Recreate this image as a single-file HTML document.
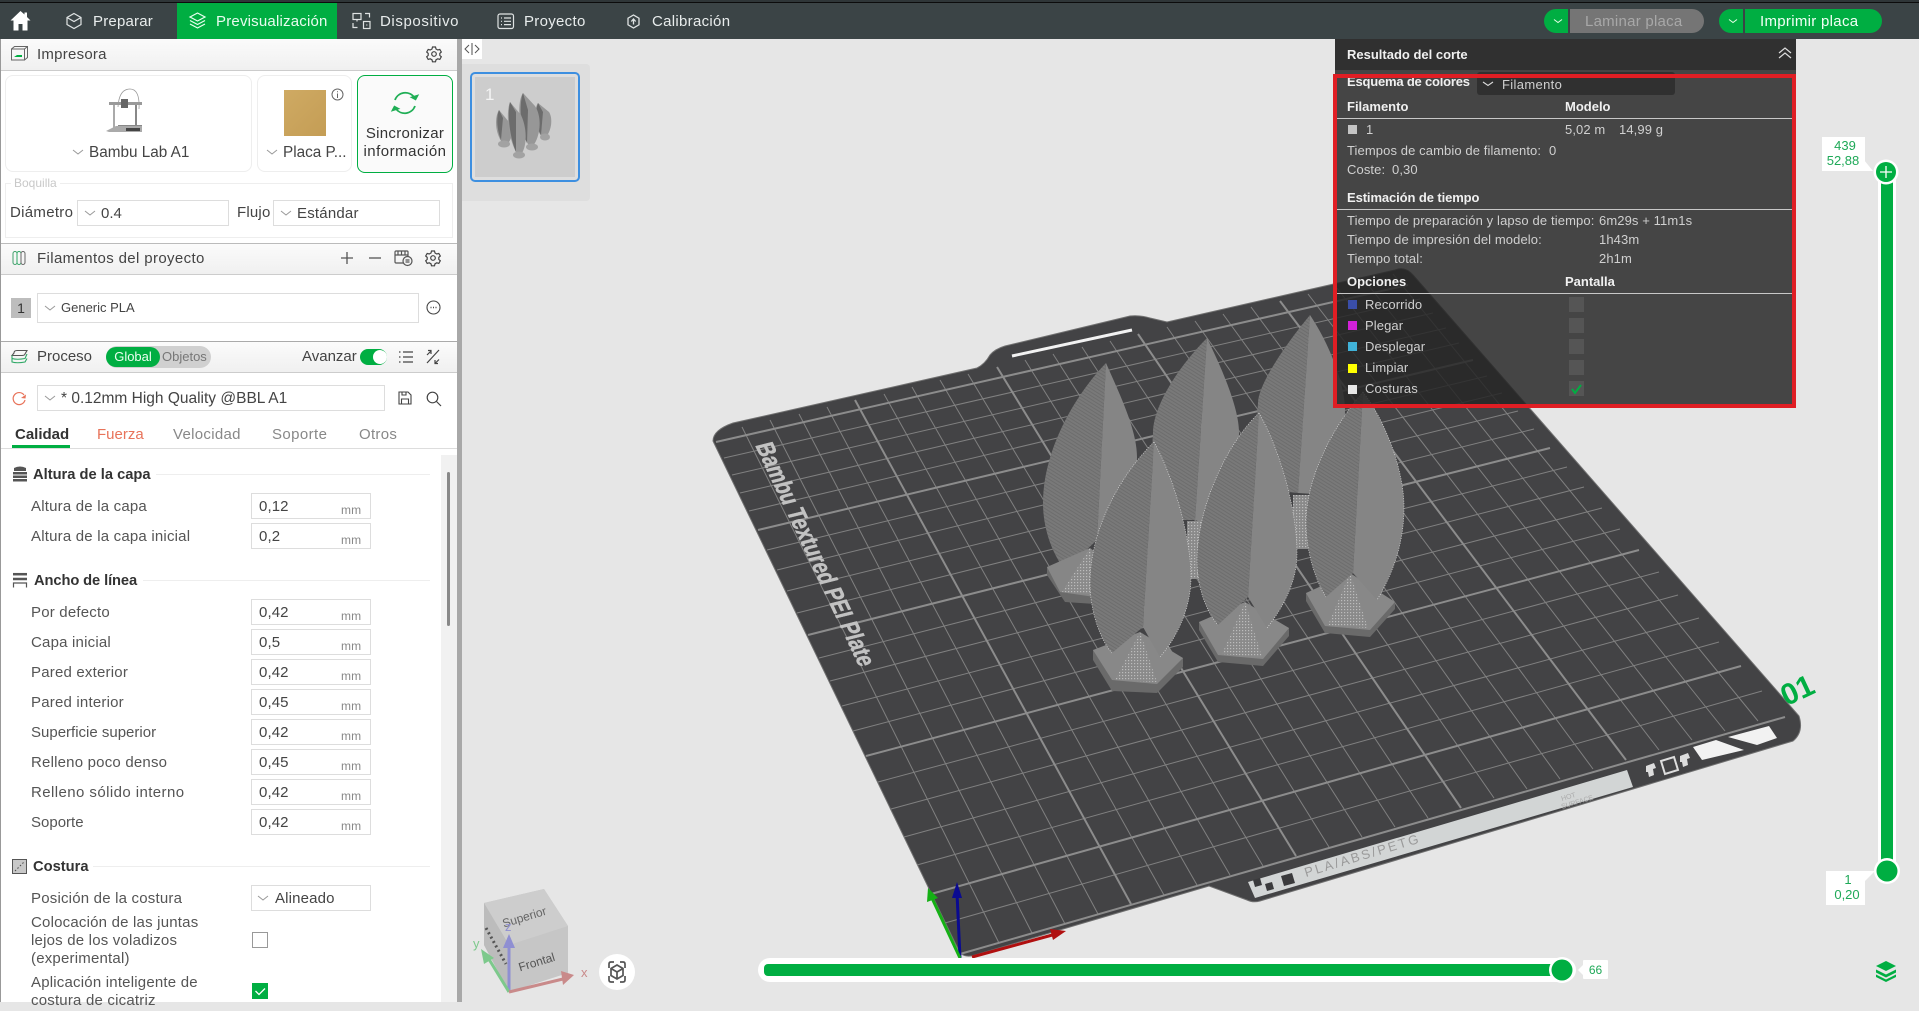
<!DOCTYPE html>
<html lang="es"><head><meta charset="utf-8"><title>Bambu Studio</title>
<style>
html,body{margin:0;padding:0;width:1919px;height:1002px;overflow:hidden;background:#e6e6e6;font-family:"Liberation Sans",sans-serif;color:#444}
div,span,svg{box-sizing:border-box}
.a{position:absolute}
.t{position:absolute;line-height:20px;height:20px;white-space:nowrap;font-size:15px;transform:translateY(1px)}
.nav{color:#e8ecec;letter-spacing:.2px}
.hd{position:absolute;left:1px;width:456px;background:linear-gradient(#fbfbfb,#f0f0f0);border-bottom:1px solid #ccc}
.i{position:absolute;left:251px;width:120px;height:26px;border:1px solid #ddd;background:#fff;font-size:15px;line-height:26px;padding-left:7px;color:#444;letter-spacing:.1px}
.i i{position:absolute;left:89px;top:3px;font-style:normal;font-size:12px;color:#888}
.l{position:absolute;left:31px;font-size:15px;line-height:20px;height:20px;white-space:nowrap;color:#555;letter-spacing:.2px;transform:translateY(1px)}
.s{position:absolute;left:33px;font-size:14.7px;font-weight:bold;line-height:20px;height:20px;color:#333;white-space:nowrap;transform:translateY(1px)}
.r{position:absolute;height:1px;background:#eee;width:auto;right:1489px}
.p{position:absolute;line-height:18px;height:18px;font-size:13px;color:#d0d0d0;white-space:nowrap;letter-spacing:.1px;transform:translateY(1px)}
.b{position:absolute;line-height:18px;height:18px;font-size:13px;font-weight:bold;color:#f0f0f0;white-space:nowrap;transform:translateY(1px)}
.ln{position:absolute;left:1337px;width:455px;height:1px;background:#c8c8c8}
.sw{position:absolute;left:1348px;width:9px;height:9px}
.cb{position:absolute;left:1569px;width:15px;height:15px;background:#555}
.fr{position:absolute;border:1px solid #ddd;background:#fff}
svg{position:absolute;overflow:visible}
</style></head><body>

<!-- 3D viewport -->
<svg class="a" style="left:0;top:0" width="1919" height="1002" viewBox="0 0 1919 1002">
<defs>
<pattern id="st" width="3" height="3" patternUnits="userSpaceOnUse" patternTransform="rotate(32)"><rect width="3" height="3" fill="#797979"/><rect width="3" height="1" fill="#6d6d6d"/></pattern>
<pattern id="dt" width="3" height="3" patternUnits="userSpaceOnUse"><rect width="3" height="3" fill="#8a8a8a"/><rect width="1.200" height="1.200" fill="#bcbcbc"/></pattern>
</defs>
<path d="M713 441Q713 430 733 423L977 368Q985 364 990 355Q995 349 1005 346L1130 316Q1140 315 1150 318L1167 322L1395 270Q1405 266 1413 275L1799 716Q1804 732 1793 741L1260 901Q1253 903 1247 900L1209 886L975 955Q966 958 960 953Z" fill="#434345" stroke="#707070" stroke-width="1"/>
<g stroke="#808080" stroke-width="1" fill="none">
<path d="M724 458L1420 299M732 475L1433 313M740 493L1446 328M749 511L1459 343M767 550L1487 376M777 570L1502 393M787 591L1518 411M797 613L1534 429M819 658L1567 467M830 681L1584 487M842 706L1602 508M853 731L1620 529M878 782L1659 572M891 809L1678 595M904 837L1699 618M917 865L1719 642M945 923L1762 691"/>
<path d="M742 427L999 943M770 420L1032 933M799 414L1065 924M827 407L1098 914M884 394L1164 895M912 387L1197 885M940 380L1230 875M968 374L1263 866M1025 360L1329 847M1053 354L1362 837M1082 347L1395 827M1110 341L1428 818M1167 327L1494 798M1195 321L1527 789M1223 314L1560 779M1251 307L1593 769M1308 294L1659 750M1336 287L1692 740M1365 281L1725 731M1393 274L1758 721"/>
</g>
<g stroke="#8c8c8c" stroke-width="2" fill="none">
<path d="M716 442L1408 285M758 530L1473 360M808 635L1550 448M866 756L1639 550M931 894L1741 666M960 954L1785 717"/>
<path d="M855 400L1131 904M997 367L1296 856M1138 334L1461 808M1280 301L1626 760"/>
</g>
<path d="M1012 356L1132 330" stroke="#f2f2f2" stroke-width="3"/>
<text transform="matrix(.425 .904 -1.36 .34 755 445)" font-family="Liberation Sans" font-weight="bold" font-size="18" fill="#c2c2c2" stroke="#c2c2c2" stroke-width=".4" textLength="246" lengthAdjust="spacingAndGlyphs">Bambu Textured PEI Plate</text>
<polygon points="1248,882 1627,770 1633,787 1255,898" fill="#d2d5d5"/>
<text transform="matrix(.96 -.29 .29 .96 1306 877)" font-family="Liberation Sans" font-size="13" fill="#9a9a9a" textLength="118">PLA/ABS/PETG</text>
<text transform="matrix(.96 -.29 .29 .96 1562 801)" font-family="Liberation Sans" font-size="7" fill="#aaa">HOT</text>
<text transform="matrix(.96 -.29 .29 .96 1562 809)" font-family="Liberation Sans" font-size="7" fill="#aaa">SURFACE</text>
<path d="M1253 880l7-2 2 7-7 2zM1265 884l7-2 2 7-7 2zM1281 876l11-3 3 10-11 3z" fill="#3a3a3c"/>
<path d="M1661 761l13-4 4 13-13 4z" fill="none" stroke="#ddd" stroke-width="2"/>
<path d="M1646 766l8-3 2 5-3 1 1 6-5 2-1-5-2 0zM1680 756l8-3 2 5-3 1 1 6-5 2-1-5-2 0z" fill="#ddd"/>
<polygon points="1693,747 1716,740 1744,750 1702,760" fill="#f2f2f2"/>
<polygon points="1728,737 1769,726 1777,738 1757,745" fill="#f2f2f2"/>
<text transform="rotate(-25 1800 688)" x="1780" y="699" font-family="Liberation Sans" font-weight="bold" font-size="30" fill="#00ae42">01</text>

<!-- bed axes -->
<path d="M960 958L957 893" stroke="#0a0a90" stroke-width="3"/><polygon points="957,882 952,898 962,898" fill="#0a0a90"/>
<path d="M960 958L931 896" stroke="#15b015" stroke-width="3"/><polygon points="928,888 927,902 938,898" fill="#15b015"/>
<path d="M972 957L1056 934" stroke="#b01010" stroke-width="3"/><polygon points="1066,931 1050,929 1053,940" fill="#b01010"/>

<!-- models: back row -->
<g>
<path d="M1106 363C1075 395 1043 450 1043 503C1043 530 1053 555 1065 570L1097 540Z" fill="url(#st)"/>
<path d="M1106 363C1120 395 1137 430 1137 457C1137 500 1115 560 1110 575L1097 540Z" fill="#858585"/>
<polygon points="1047,567 1047,575 1065,602 1095,604 1120,579 1120,570" fill="#6a6a6a"/>
<polygon points="1047,567 1090,548 1120,570 1095,597 1060,592" fill="#868686"/>
<polygon points="1062,592 1090,548 1100,595" fill="url(#dt)"/>
<path d="M1207 338C1180 365 1153 405 1153 433C1150 470 1160 500 1170 520L1195 520Z" fill="url(#st)"/>
<path d="M1207 338C1225 375 1239 410 1239 433C1239 470 1232 510 1222 530L1195 520Z" fill="#858585"/>
<rect x="1187" y="521" width="16" height="58" fill="url(#dt)"/>
<path d="M1310 315C1285 345 1258 385 1258 403C1255 440 1262 470 1270 490L1298 493Z" fill="url(#st)"/>
<path d="M1310 315C1330 345 1345 385 1345 410C1345 440 1340 470 1330 495L1298 493Z" fill="#858585"/>
<rect x="1293" y="495" width="18" height="54" fill="url(#dt)"/>
</g>
<!-- models: front row -->
<g stroke-linejoin="round">
<polygon points="1306,593 1306,601 1325,633 1370,637 1395,609 1395,602" fill="#6a6a6a"/>
<polygon points="1306,593 1350,573 1395,602 1370,630 1325,626" fill="#888"/>
<polygon points="1328,625 1350,573 1368,628" fill="url(#dt)"/>
<path d="M1363 392C1330 430 1306 480 1306 523C1306 550 1315 580 1326 597L1353 573Z" fill="url(#st)"/>
<path d="M1363 392C1385 420 1404 470 1404 507C1404 540 1395 570 1377 600L1353 573Z" fill="#858585"/>
<path d="M1363 392C1330 430 1306 480 1306 523C1306 550 1315 580 1326 597M1363 392C1385 420 1404 470 1404 507C1404 540 1395 570 1377 600" fill="none" stroke="#dcdcdc" stroke-width=".7" stroke-dasharray="1 1.500"/>

<polygon points="1199,622 1199,630 1218,662 1263,666 1289,636 1289,628" fill="#6a6a6a"/>
<polygon points="1199,622 1245,602 1289,628 1263,659 1218,655" fill="#888"/>
<polygon points="1222,654 1245,602 1262,657" fill="url(#dt)"/>
<path d="M1259 413C1225 445 1197 510 1197 560C1197 585 1205 610 1218 625L1248 597Z" fill="url(#st)"/>
<path d="M1259 413C1280 450 1297 510 1297 553C1297 580 1285 605 1267 628L1248 597Z" fill="#858585"/>
<path d="M1259 413C1225 445 1197 510 1197 560C1197 585 1205 610 1218 625M1259 413C1280 450 1297 510 1297 553C1297 580 1285 605 1267 628" fill="none" stroke="#dcdcdc" stroke-width=".7" stroke-dasharray="1 1.500"/>

<polygon points="1093,650 1093,660 1112,691 1157,693 1183,667 1183,658" fill="#6a6a6a"/>
<polygon points="1093,650 1140,632 1183,658 1157,684 1112,680" fill="#888"/>
<polygon points="1115,680 1140,632 1157,682" fill="url(#dt)"/>
<path d="M1154 442C1120 475 1090 530 1090 583C1090 610 1100 640 1112 653L1143 627Z" fill="url(#st)"/>
<path d="M1154 442C1175 480 1191 540 1191 577C1191 610 1175 640 1160 657L1143 627Z" fill="#858585"/>
<path d="M1154 442C1120 475 1090 530 1090 583C1090 610 1100 640 1112 653M1154 442C1175 480 1191 540 1191 577C1191 610 1175 640 1160 657" fill="none" stroke="#dcdcdc" stroke-width=".7" stroke-dasharray="1 1.500"/>
</g>

<!-- nav cube -->
<polygon points="484,903 544,889 568,926 568,973 509,992 484,945" fill="#c6c6c6"/>
<polygon points="484,903 544,889 568,926 509,945" fill="#cdcdcd"/>
<polygon points="484,903 509,945 509,992 484,945" fill="#bcbcbc"/>
<text transform="rotate(-17 525 918)" x="502" y="921" font-family="Liberation Sans" font-size="12" fill="#666">Superior</text>
<text transform="rotate(-17 537 962)" x="518" y="966" font-family="Liberation Sans" font-size="12" fill="#555">Frontal</text>
<path d="M486 928L506 964" stroke="#555" stroke-width="3" stroke-dasharray="2 3"/>
<path d="M509 992V945" stroke="#8f8fd2" stroke-width="3"/><polygon points="509,934 503,948 515,948" fill="#8f8fd2"/>
<path d="M509 992L487 956" stroke="#7dc98c" stroke-width="3"/><polygon points="481,949 484,964 494,958" fill="#7dc98c"/>
<path d="M509 992L563 979" stroke="#c98a8a" stroke-width="3"/><polygon points="574,975 561,971 563,985" fill="#c98a8a"/>
<text x="505" y="931" font-family="Liberation Sans" font-size="13" fill="#8f8fd2">z</text>
<text x="473" y="948" font-family="Liberation Sans" font-size="13" fill="#7dc98c">y</text>
<text x="581" y="977" font-family="Liberation Sans" font-size="13" fill="#c98a8a">x</text>
<circle cx="617" cy="972" r="18" fill="#fff"/>
<g fill="none" stroke="#555" stroke-width="1.700"><path d="M609 968v-4q0-2 2-2h3M620 962h3q2 0 2 2v4M609 976v4q0 2 2 2h3M620 982h3q2 0 2-2v-4"/><path d="M617 965l6 3.500v7l-6 3.500-6-3.500v-7zM611 968.500l6 3.500 6-3.500M617 972v7"/></g>

<!-- sliders -->
<rect x="758" y="958" width="818" height="24" rx="12" fill="#fff"/>
<rect x="764" y="964" width="800" height="12" rx="4" fill="#00ae42"/>
<circle cx="1562" cy="970" r="13" fill="#fff"/><circle cx="1562" cy="970" r="10.500" fill="#00ae42"/>
<polygon points="1584,964 1578,970 1584,976" fill="#fff"/>
<rect x="1583" y="960" width="25" height="19" rx="1" fill="#fff"/>
<rect x="1878" y="165" width="18" height="712" rx="9" fill="#fff"/>
<rect x="1881" y="172" width="12" height="699" fill="#00ae42"/>
<circle cx="1886" cy="172" r="12.500" fill="#fff"/><circle cx="1886" cy="172" r="10" fill="#00ae42"/>
<path d="M1886 166v12M1880 172h12" stroke="#fff" stroke-width="1.300"/>
<circle cx="1887" cy="871" r="13" fill="#fff"/><circle cx="1887" cy="871" r="10.500" fill="#00ae42"/>
<rect x="1822" y="137" width="43" height="34" fill="#fff"/><polygon points="1864,160 1873,171 1864,171" fill="#fff"/>
<rect x="1826" y="871" width="39" height="34" fill="#fff"/><polygon points="1864,871 1875,871 1864,882" fill="#fff"/>
<g fill="#00ae42">
<path d="M1886 961l10 5-10 5-10-5z"/><path d="M1876 969.500l10 5 10-5v3l-10 5-10-5z"/><path d="M1876 974.500l10 5 10-5v2.500l-10 5-10-5z" />
</g>
</svg>
<div class="t" style="left:1822px;width:46px;top:135px;text-align:center;font-size:13px;color:#1fa958">439</div>
<div class="t" style="left:1820px;width:46px;top:150px;text-align:center;font-size:13px;color:#1fa958">52,88</div>
<div class="t" style="left:1826px;width:44px;top:869px;text-align:center;font-size:13px;color:#1fa958">1</div>
<div class="t" style="left:1825px;width:44px;top:884px;text-align:center;font-size:13px;color:#1fa958">0,20</div>
<div class="t" style="left:1583px;width:25px;top:959px;text-align:center;font-size:12px;color:#1fa958">66</div>

<!-- thumbnail panel -->
<div class="a" style="left:462px;top:64px;width:128px;height:137px;background:#dedede;border-radius:0 4px 4px 0"></div>
<div class="a" style="left:470px;top:72px;width:110px;height:110px;border:2px solid #3d8fe0;border-radius:5px;background:#dedede"></div>
<div class="a" style="left:475px;top:77px;width:100px;height:100px;background:#cdcdcd"></div>
<div class="t" style="left:485px;top:84px;color:#f4f4f4;font-size:17px">1</div>
<svg class="a" style="left:0;top:0" width="600" height="200" viewBox="0 0 600 200">
<path d="M538 103C533 110 534 130 544 139C552 132 553 118 549 112Z" fill="#979797"/><path d="M538 103C535 112 535 125 541 135L543 112Z" fill="#6c6c6c"/>
<path d="M523 93C516 103 519 135 531 148C540 140 543 118 535 106Z" fill="#979797"/><path d="M523 93C519 103 520 128 527 143L528 110Z" fill="#6c6c6c"/>
<path d="M499 110C494 118 495 135 504 145C513 143 513 130 509 122Z" fill="#979797"/><path d="M499 110C496 118 497 130 501 140L503 118Z" fill="#6c6c6c"/>
<path d="M510 102C505 115 509 143 519 157C527 150 528 130 521 115Z" fill="#9a9a9a"/><path d="M510 102C507 115 510 138 516 152L516 112Z" fill="#6c6c6c"/>
<ellipse cx="504" cy="144" rx="6" ry="3.500" fill="#a2a2a2"/><ellipse cx="519" cy="155" rx="6" ry="3.500" fill="#a2a2a2"/><ellipse cx="532" cy="147" rx="6" ry="3.500" fill="#a2a2a2"/><ellipse cx="545" cy="137" rx="5" ry="3.500" fill="#a2a2a2"/>
</svg>
<div class="a" style="left:462px;top:39px;width:20px;height:20px;background:#fff"></div>
<svg class="a" style="left:462px;top:39px" width="20" height="20" fill="none" stroke="#555" stroke-width="1"><path d="M7 6l-4 4 4 4M13 6l4 4-4 4"/><path d="M10 4v12" stroke="#888" stroke-width="1.500"/></svg>

<!-- slice panel -->
<div class="a" style="left:1335px;top:39px;width:461px;height:31px;background:#303030"></div>
<div class="b" style="left:1347px;top:45px;font-size:13px">Resultado del corte</div>
<svg class="a" style="left:1778px;top:46px" width="14" height="14" fill="none" stroke="#ddd" stroke-width="1.200"><path d="M1 7l6-5 6 5M1 12l6-5 6 5"/></svg>
<div class="a" style="left:1335px;top:70px;width:461px;height:338px;background:rgba(37,37,37,.834)"></div>
<div class="a" style="left:1477px;top:72px;width:198px;height:23px;background:#303030;border-radius:3px"></div>
<svg class="a" style="left:1482px;top:80px" width="12" height="8" fill="none" stroke="#ddd" stroke-width="1.100"><path d="M1 2l5 3.500 5-3.500"/></svg>
<div class="p" style="left:1502px;top:75px;letter-spacing:.35px">Filamento</div>
<div class="b" style="left:1347px;top:72px;letter-spacing:-.2px">Esquema de colores</div>
<div class="b" style="left:1347px;top:97px">Filamento</div><div class="b" style="left:1565px;top:97px">Modelo</div>
<div class="ln" style="top:118px"></div>
<div class="sw" style="top:125px;background:#c4c4c4"></div>
<div class="p" style="left:1366px;top:120px">1</div>
<div class="p" style="left:1565px;top:120px">5,02 m</div><div class="p" style="left:1619px;top:120px">14,99 g</div>
<div class="p" style="left:1347px;top:141px">Tiempos de cambio de filamento:</div><div class="p" style="left:1549px;top:141px">0</div>
<div class="p" style="left:1347px;top:160px">Coste:</div><div class="p" style="left:1392px;top:160px">0,30</div>
<div class="b" style="left:1347px;top:188px;letter-spacing:-.1px">Estimación de tiempo</div>
<div class="ln" style="top:209px"></div>
<div class="p" style="left:1347px;top:211px;letter-spacing:.13px">Tiempo de preparación y lapso de tiempo:</div><div class="p" style="left:1599px;top:211px">6m29s + 11m1s</div>
<div class="p" style="left:1347px;top:230px">Tiempo de impresión del modelo:</div><div class="p" style="left:1599px;top:230px">1h43m</div>
<div class="p" style="left:1347px;top:249px">Tiempo total:</div><div class="p" style="left:1599px;top:249px">2h1m</div>
<div class="b" style="left:1347px;top:272px">Opciones</div><div class="b" style="left:1565px;top:272px">Pantalla</div>
<div class="ln" style="top:293px"></div>
<div class="sw" style="top:300px;background:#3a4ea8"></div><div class="p" style="left:1365px;top:295px">Recorrido</div><div class="cb" style="top:297px"></div>
<div class="sw" style="top:321px;background:#d321d8"></div><div class="p" style="left:1365px;top:316px">Plegar</div><div class="cb" style="top:318px"></div>
<div class="sw" style="top:342px;background:#40b2d8"></div><div class="p" style="left:1365px;top:337px">Desplegar</div><div class="cb" style="top:339px"></div>
<div class="sw" style="top:364px;background:#ffff00"></div><div class="p" style="left:1365px;top:358px">Limpiar</div><div class="cb" style="top:360px"></div>
<div class="sw" style="top:385px;background:#e8e8e8"></div><div class="p" style="left:1365px;top:379px">Costuras</div><div class="cb" style="top:381px"></div>
<svg class="a" style="left:1569px;top:381px" width="15" height="15" fill="none" stroke="#00ae42" stroke-width="2"><path d="M3 8l3 4 6-8"/></svg>
<div class="a" style="left:1333px;top:74px;width:463px;height:334px;border:4px solid #e01e24"></div>

<!-- top bar -->
<div class="a" style="left:0;top:0;width:1919px;height:39px;background:#3b4446;border-top:2px solid #2f3638"></div>
<div class="a" style="left:0;top:2px;width:1919px;height:1px;background:#0c0c0c"></div>
<div class="a" style="left:177px;top:3px;width:160px;height:36px;background:#00ae42"></div>
<svg class="a" style="left:10px;top:10px" width="21" height="22"><path d="M10.500 1L0.500 10.500H3.500V20.500H8.500V14H12.500V20.500H17.500V10.500H20.500L17 7V2.500H14.500V4.500Z" fill="#fff"/></svg>
<svg class="a" style="left:65px;top:12px" width="18" height="18" fill="none" stroke="#dfe3e3" stroke-width="1.200"><path d="M9 1.500L16 5.500V12.500L9 16.500L2 12.500V5.500ZM2 5.500L9 9.500L16 5.500M9 9.500"/></svg>
<div class="t nav" style="left:93px;top:11px">Preparar</div>
<svg class="a" style="left:188px;top:12px" width="19" height="18" fill="none" stroke="#e8fff0" stroke-width="1.200"><path d="M9.500 1L17 5L9.500 9L2 5ZM2 8.500L9.500 12.500L17 8.500M2 12L9.500 16L17 12"/></svg>
<div class="t nav" style="left:216px;top:11px;color:#e9fbef">Previsualización</div>
<svg class="a" style="left:352px;top:12px" width="19" height="18" fill="none" stroke="#dfe3e3" stroke-width="1.200"><rect x="1" y="1.500" width="8" height="6"/><path d="M13 1.500h4.500v4M1 11v4.500h4.500"/><rect x="11.500" y="9.500" width="6.500" height="7"/><path d="M5 7.500v2M14.800 12.500v1"/></svg>
<div class="t nav" style="left:380px;top:11px;letter-spacing:.6px">Dispositivo</div>
<svg class="a" style="left:497px;top:13px" width="18" height="17" fill="none" stroke="#dfe3e3" stroke-width="1.200"><rect x="1" y="1" width="15.500" height="14.500" rx="2"/><path d="M4 5h1M7 5h7M4 8.300h1M7 8.300h7M4 11.600h1M7 11.600h7"/></svg>
<div class="t nav" style="left:524px;top:11px;letter-spacing:.3px">Proyecto</div>
<svg class="a" style="left:626px;top:14px" width="15" height="15" fill="none" stroke="#dfe3e3" stroke-width="1.300"><path d="M7.500 1L13 4.200V10.800L7.500 14L2 10.800V4.200Z"/><path d="M7.500 10.500V5.500M5.300 7.500L7.500 5L9.700 7.500"/></svg>
<div class="t nav" style="left:652px;top:11px;letter-spacing:.3px">Calibración</div>

<div class="a" style="left:1544px;top:9px;width:24px;height:24px;background:#00ae42;border-radius:12px 0 0 12px"></div>
<svg class="a" style="left:1553px;top:18px" width="10" height="7" fill="none" stroke="#e8ffe8" stroke-width="1"><path d="M1 1.500l4 3 4-3"/></svg>
<div class="a" style="left:1570px;top:9px;width:134px;height:24px;background:#757575;border-radius:0 12px 12px 0"></div>
<div class="t" style="left:1585px;top:11px;color:#a8a8a8;letter-spacing:.25px">Laminar placa</div>
<div class="a" style="left:1719px;top:9px;width:24px;height:24px;background:#00ae42;border-radius:12px 0 0 12px"></div>
<svg class="a" style="left:1728px;top:18px" width="10" height="7" fill="none" stroke="#e8ffe8" stroke-width="1"><path d="M1 1.500l4 3 4-3"/></svg>
<div class="a" style="left:1745px;top:9px;width:137px;height:24px;background:#00ae42;border-radius:0 12px 12px 0"></div>
<div class="t" style="left:1760px;top:11px;color:#f2fff6;letter-spacing:.3px">Imprimir placa</div>

<!-- sidebar -->
<div class="a" style="left:0;top:39px;width:457px;height:963px;background:#fff;border-left:1px solid #999"></div>
<div class="a" style="left:457px;top:39px;width:5px;height:963px;background:#a8a8a8"></div>

<div class="hd" style="top:39px;height:32px"></div>
<svg class="a" style="left:11px;top:46px" width="17" height="15" fill="none" stroke="#666" stroke-width="1"><rect x=".5" y="3" width="13" height="11"/><path d="M.5 3L3.500.5H16.500V11.500L13.500 14M13.500 3L16.500.5"/><path d="M3 11H11V9H6Z" fill="#00ae42" stroke="none"/></svg>
<div class="t" style="left:37px;top:44px;letter-spacing:.25px">Impresora</div>
<svg class="a" style="left:426px;top:46px" width="16" height="16" viewBox="0 0 16 16" fill="none" stroke="#444" stroke-width="1.200"><path d="M6.500 1h3l.5 2 1.800 1 2-.6 1.500 2.600-1.500 1.400v2l1.500 1.400-1.500 2.600-2-.6-1.800 1-.5 2h-3l-.5-2-1.800-1-2 .6-1.500-2.600 1.500-1.400v-2L.7 6l1.500-2.600 2 .6 1.800-1z"/><circle cx="8" cy="8" r="2.300"/></svg>

<div class="fr" style="left:5px;top:75px;width:247px;height:97px;border-radius:8px;border-color:#eee"></div>
<svg class="a" style="left:104px;top:87px" width="44" height="48" viewBox="0 0 44 48">
<path d="M14 20Q15 2 26 2Q36 2 35 22" fill="none" stroke="#999" stroke-width=".8"/>
<rect x="9" y="15" width="2" height="26" fill="#aaa"/><rect x="31" y="15" width="2" height="28" fill="#888"/>
<rect x="5" y="15" width="33" height="3" fill="#9a9a9a"/><rect x="17" y="12" width="7" height="9" fill="#666"/>
<rect x="14" y="38" width="24" height="3" fill="#888"/>
<path d="M2 44L12 39H38V45H5Z" fill="#aaa"/><rect x="22" y="41" width="14" height="3" fill="#444"/>
</svg>
<svg class="a" style="left:72px;top:149px" width="12" height="7" fill="none" stroke="#999"><path d="M1 1l5 4 5-4"/></svg>
<div class="t" style="left:89px;top:142px;font-size:15.300px;color:#444">Bambu Lab A1</div>

<div class="fr" style="left:257px;top:75px;width:95px;height:97px;border-radius:8px;border-color:#eee"></div>
<div class="a" style="left:284px;top:90px;width:42px;height:46px;background:linear-gradient(135deg,#cfaa63,#c49d55)"></div>
<svg class="a" style="left:331px;top:88px" width="13" height="13" fill="none" stroke="#666"><circle cx="6.500" cy="6.500" r="5.500"/><path d="M6.500 5.500V10M6.500 3.200V4.200"/></svg>
<svg class="a" style="left:266px;top:149px" width="12" height="7" fill="none" stroke="#999"><path d="M1 1l5 4 5-4"/></svg>
<div class="t" style="left:283px;top:142px;font-size:15.300px;color:#444">Placa P...</div>

<div class="fr" style="left:357px;top:75px;width:96px;height:98px;border-radius:8px;border-color:#00ae42;background:#fafafa"></div>
<svg class="a" style="left:389px;top:90px" width="32" height="26" fill="none" stroke="#1fae55" stroke-width="1.800"><path d="M6 10A11 11 0 0 1 25 7"/><path d="M26 16A11 11 0 0 1 7 19"/><path d="M21 9l7 1 1-7z" fill="#1fae55" stroke="none" transform="rotate(20 26 7)"/><path d="M11 17l-7-1-1 7z" fill="#1fae55" stroke="none" transform="rotate(20 6 19)"/></svg>
<div class="t" style="left:357px;width:96px;top:123px;text-align:center;color:#333;letter-spacing:.3px">Sincronizar</div>
<div class="t" style="left:357px;width:96px;top:141px;text-align:center;color:#333;letter-spacing:.5px">información</div>

<div class="a" style="left:5px;top:183px;width:448px;height:55px;border:1px solid #eee"></div>
<div class="t" style="left:11px;top:172px;background:#fff;padding:0 3px;font-size:12px;color:#c8c8c8">Boquilla</div>
<div class="t" style="left:10px;top:202px;color:#444;letter-spacing:.3px">Diámetro</div>
<div class="fr" style="left:77px;top:200px;width:152px;height:26px"></div>
<svg class="a" style="left:84px;top:210px" width="12" height="7" fill="none" stroke="#999"><path d="M1 1l5 4 5-4"/></svg>
<div class="t" style="left:101px;top:203px">0.4</div>
<div class="t" style="left:237px;top:202px;color:#444;letter-spacing:.2px">Flujo</div>
<div class="fr" style="left:273px;top:200px;width:167px;height:26px"></div>
<svg class="a" style="left:280px;top:210px" width="12" height="7" fill="none" stroke="#999"><path d="M1 1l5 4 5-4"/></svg>
<div class="t" style="left:297px;top:203px;letter-spacing:.2px">Estándar</div>

<div class="hd" style="top:243px;height:32px;border-top:1px solid #bbb"></div>
<svg class="a" style="left:12px;top:250px" width="16" height="16" fill="none" stroke="#3f9f6a" stroke-width="1"><rect x="1" y="1.500" width="4" height="13" rx="2"/><rect x="5" y="1.500" width="4" height="13" rx="2" stroke="#2fa866"/><rect x="9" y="1.500" width="4" height="13" rx="2" stroke="#666"/></svg>
<div class="t" style="left:37px;top:248px;letter-spacing:.37px">Filamentos del proyecto</div>
<svg class="a" style="left:340px;top:251px" width="14" height="14" stroke="#555" stroke-width="1.300"><path d="M7 1v12M1 7h12"/></svg>
<svg class="a" style="left:368px;top:251px" width="14" height="14" stroke="#555" stroke-width="1.300"><path d="M1 7h12"/></svg>
<svg class="a" style="left:394px;top:250px" width="19" height="16" fill="none" stroke="#555" stroke-width="1.200"><rect x="1" y="1" width="13" height="12" rx="1"/><path d="M1 5h13M4 1v4M7.500 1v4M11 1v4"/><circle cx="13.500" cy="11" r="4.500" fill="#f3f3f3"/><path d="M11.500 10h4M11.500 12h4"/></svg>
<svg class="a" style="left:425px;top:250px" width="16" height="16" viewBox="0 0 16 16" fill="none" stroke="#444" stroke-width="1.200"><path d="M6.500 1h3l.5 2 1.800 1 2-.6 1.500 2.600-1.500 1.400v2l1.500 1.400-1.500 2.600-2-.6-1.800 1-.5 2h-3l-.5-2-1.800-1-2 .6-1.500-2.600 1.500-1.400v-2L.7 6l1.500-2.600 2 .6 1.800-1z"/><circle cx="8" cy="8" r="2.300"/></svg>

<div class="a" style="left:11px;top:298px;width:20px;height:20px;background:#bdbdbd;text-align:center;line-height:20px;font-size:14px;color:#333">1</div>
<div class="fr" style="left:37px;top:293px;width:382px;height:30px"></div>
<svg class="a" style="left:44px;top:305px" width="12" height="7" fill="none" stroke="#999"><path d="M1 1l5 4 5-4"/></svg>
<div class="t" style="left:61px;top:297px;font-size:13px">Generic PLA</div>
<svg class="a" style="left:426px;top:300px" width="15" height="15" fill="none" stroke="#444" stroke-width="1.100"><circle cx="7.500" cy="7.500" r="6.500"/><path d="M4.500 7.500h1M7 7.500h1M9.500 7.500h1" stroke-width="1.400"/></svg>

<div class="hd" style="top:341px;height:32px;border-top:1px solid #aaa"></div>
<svg class="a" style="left:11px;top:349px" width="17" height="16" fill="none" stroke="#555" stroke-width="1.100"><path d="M3 4Q3 1.500 6 1.500H16L14 5Q13.500 6.500 11 6.500H1L3 4Z"/><path d="M1 6.500V9.500Q6 11 14 9.500L16 5M1 10V13Q6 14.500 14 13L16 9.500" stroke="#2fa866"/></svg>
<div class="t" style="left:37px;top:346px">Proceso</div>
<div class="a" style="left:106px;top:346px;width:105px;height:22px;background:#d0d0d0;border-radius:11px"></div>
<div class="a" style="left:106px;top:347px;width:54px;height:20px;background:#00ae42;border-radius:10px;text-align:center;line-height:20px;font-size:13px;color:#eafff0">Global</div>
<div class="t" style="left:162px;top:346px;font-size:13px;color:#777">Objetos</div>
<div class="t" style="left:302px;top:346px">Avanzar</div>
<div class="a" style="left:360px;top:349px;width:27px;height:16px;background:#00ae42;border-radius:8px"></div>
<div class="a" style="left:373px;top:350px;width:14px;height:14px;background:#fff;border-radius:7px"></div>
<svg class="a" style="left:398px;top:350px" width="15" height="14" stroke="#444" stroke-width="1.300"><path d="M1 2h1.500M1 7h1.500M1 12h1.500M5 2h10M5 7h10M5 12h10"/></svg>
<svg class="a" style="left:425px;top:349px" width="16" height="16" fill="none" stroke="#444" stroke-width="1.200"><path d="M3 1.500L6 1.500L6 5M6 2L2 6M14 1L2 14M13 14.500H10V11M10 14.500L14 10.500"/></svg>

<svg class="a" style="left:12px;top:391px" width="15" height="15" fill="none" stroke="#e8735a" stroke-width="1.200"><path d="M12 4A6 6 0 1 0 13 9"/><path d="M9 7L13.500 7.500L14 3.500Z" fill="#e8735a" stroke="none"/></svg>
<div class="fr" style="left:37px;top:385px;width:348px;height:26px"></div>
<svg class="a" style="left:44px;top:395px" width="12" height="7" fill="none" stroke="#999"><path d="M1 1l5 4 5-4"/></svg>
<div class="t" style="left:61px;top:388px;font-size:15.500px">* 0.12mm High Quality @BBL A1</div>
<svg class="a" style="left:398px;top:391px" width="14" height="14" fill="none" stroke="#444" stroke-width="1.100"><path d="M1 1H10L13 4V13H1Z"/><path d="M3.500 13V8H10.500V13M4 1V4H8V1"/></svg>
<svg class="a" style="left:426px;top:391px" width="16" height="16" fill="none" stroke="#444" stroke-width="1.200"><circle cx="6.500" cy="6.500" r="5.300"/><path d="M10.500 10.500L15 15"/></svg>

<div class="t" style="left:15px;top:424px;font-weight:bold;color:#333">Calidad</div>
<div class="a" style="left:12px;top:445px;width:58px;height:3px;background:#00ae42"></div>
<div class="t" style="left:97px;top:424px;color:#e8735a">Fuerza</div>
<div class="t" style="left:173px;top:424px;color:#888;letter-spacing:.3px">Velocidad</div>
<div class="t" style="left:272px;top:424px;color:#888;letter-spacing:.4px">Soporte</div>
<div class="t" style="left:359px;top:424px;color:#888;letter-spacing:.3px">Otros</div>
<div class="a" style="left:1px;top:448px;width:456px;height:1px;background:#ddd"></div>
<div class="a" style="left:441px;top:455px;width:16px;height:547px;background:#f1f1f1"></div>
<div class="a" style="left:447px;top:472px;width:3px;height:154px;background:#888;border-radius:2px"></div>

<svg class="a" style="left:12px;top:466px" width="16" height="16" fill="#555"><path d="M2 2Q8-1 14 2V5H2Z"/><rect x="1" y="6" width="14" height="2.500"/><rect x="1" y="9.500" width="14" height="2.500"/><rect x="1" y="13" width="14" height="2.500"/></svg>
<div class="s" style="top:464px">Altura de la capa</div><div class="r" style="left:156px;top:474px"></div>
<div class="l" style="top:496px">Altura de la capa</div><div class="i" style="top:493px">0,12<i>mm</i></div>
<div class="l" style="top:526px">Altura de la capa inicial</div><div class="i" style="top:523px">0,2<i>mm</i></div>

<svg class="a" style="left:12px;top:573px" width="16" height="15" fill="none" stroke="#555" stroke-width="1.200"><path d="M1 1.200H15" stroke-width="2.500"/><path d="M1 6H15" stroke-width="2.500"/><path d="M1.500 14.500V10H14.500V14.500"/></svg>
<div class="s" style="left:34px;top:570px;letter-spacing:-.1px">Ancho de línea</div><div class="r" style="left:143px;top:580px"></div>
<div class="l" style="top:602px">Por defecto</div><div class="i" style="top:599px">0,42<i>mm</i></div>
<div class="l" style="top:632px">Capa inicial</div><div class="i" style="top:629px">0,5<i>mm</i></div>
<div class="l" style="top:662px">Pared exterior</div><div class="i" style="top:659px">0,42<i>mm</i></div>
<div class="l" style="top:692px">Pared interior</div><div class="i" style="top:689px">0,45<i>mm</i></div>
<div class="l" style="top:722px;letter-spacing:0">Superficie superior</div><div class="i" style="top:719px">0,42<i>mm</i></div>
<div class="l" style="top:752px">Relleno poco denso</div><div class="i" style="top:749px">0,45<i>mm</i></div>
<div class="l" style="top:782px;letter-spacing:.42px">Relleno sólido interno</div><div class="i" style="top:779px">0,42<i>mm</i></div>
<div class="l" style="top:812px;letter-spacing:0">Soporte</div><div class="i" style="top:809px">0,42<i>mm</i></div>

<svg class="a" style="left:12px;top:859px" width="15" height="15"><rect x=".5" y=".5" width="14" height="14" fill="#c8c8c8" stroke="#555"/><path d="M3 12L12 3" stroke="#444" stroke-dasharray="1.500 2"/></svg>
<div class="s" style="top:856px">Costura</div><div class="r" style="left:93px;top:866px"></div>
<div class="l" style="top:888px">Posición de la costura</div>
<div class="fr" style="left:251px;top:885px;width:120px;height:26px"></div>
<svg class="a" style="left:257px;top:895px" width="12" height="7" fill="none" stroke="#999"><path d="M1 1l5 4 5-4"/></svg>
<div class="t" style="left:275px;top:888px;letter-spacing:.15px">Alineado</div>
<div class="l" style="top:912px">Colocación de las juntas</div>
<div class="l" style="top:930px">lejos de los voladizos</div>
<div class="l" style="top:948px">(experimental)</div>
<div class="a" style="left:252px;top:932px;width:16px;height:16px;border:1px solid #999;background:#fff"></div>
<div class="l" style="top:972px">Aplicación inteligente de</div>
<div class="l" style="top:990px">costura de cicatriz</div>
<div class="a" style="left:252px;top:983px;width:16px;height:16px;background:#00ae42"></div>
<svg class="a" style="left:252px;top:983px" width="16" height="16" fill="none" stroke="#fff" stroke-width="1.300"><path d="M3.500 8l3.500 3.500 6-6"/></svg>
</body></html>
